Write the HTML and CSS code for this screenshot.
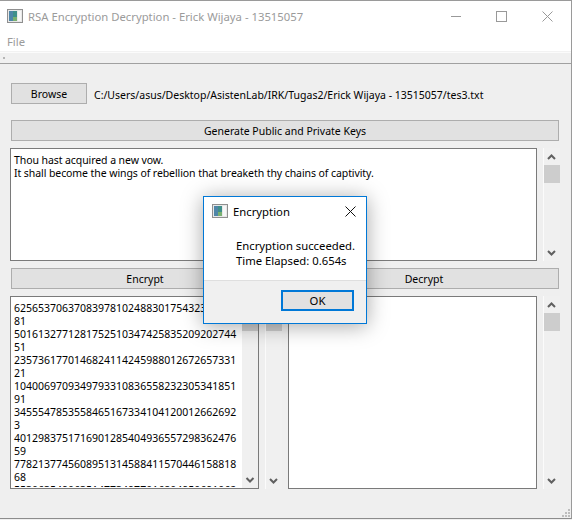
FILE: index.html
```html
<!DOCTYPE html>
<html lang="en">
<head>
<meta charset="utf-8">
<title>RSA Encryption Decryption</title>
<link rel="stylesheet" href="styles.css">
</head>
<body>
<div class="window">
  <header class="titlebar">
    <svg class="app-icon" width="16" height="14" viewBox="0 0 16 14"><rect x="0.5" y="0.5" width="15" height="13" fill="#e8e8e8" stroke="#8f8f8f"/><rect x="2" y="2" width="8" height="10" fill="#3f8f8a"/><rect x="2" y="2" width="4" height="10" fill="#4f86a8"/><rect x="6" y="8" width="4" height="4" fill="#79b070"/><rect x="11" y="2" width="3" height="10" fill="#f7f7f7"/></svg>
    <span class="title">RSA Encryption Decryption - Erick Wijaya - 13515057</span>
    <div class="caption-buttons">
      <svg width="10" height="10" viewBox="0 0 10 10"><path d="M0 5.5H10" stroke="#999" fill="none"/></svg>
      <svg width="11" height="11" viewBox="0 0 11 11"><rect x="0.5" y="0.5" width="10" height="10" stroke="#999" fill="none"/></svg>
      <svg width="11" height="11" viewBox="0 0 11 11"><path d="M0.5 0.5L10.5 10.5M10.5 0.5L0.5 10.5" stroke="#999" fill="none"/></svg>
    </div>
  </header>
  <nav class="menubar"><span>File</span></nav>
  <div class="toolbar"><span class="toolbar-handle"></span></div>
  <main class="central">
    <div class="file-row">
      <button class="btn btn-browse">Browse</button>
      <span class="path">C:/Users/asus/Desktop/AsistenLab/IRK/Tugas2/Erick Wijaya - 13515057/tes3.txt</span>
    </div>
    <button class="btn btn-generate">Generate Public and Private Keys</button>
    <div class="plain-row">
      <div class="textbox textbox-wide">
        <div class="text prose">Thou hast acquired a new vow.<br>It shall become the wings of rebellion that breaketh thy chains of captivity.</div>
      </div>
      <div class="scrollbar">
        <svg class="arrow" width="17" height="17" viewBox="0 0 17 17"><path d="M5 11L8.5 7.5L12 11" /></svg>
        <span class="thumb"></span>
        <span class="track"></span>
        <svg class="arrow" width="17" height="17" viewBox="0 0 17 17"><path d="M5 7L8.5 10.5L12 7" /></svg>
      </div>
    </div>
    <div class="action-row">
      <button class="btn btn-encrypt">Encrypt</button>
      <button class="btn btn-decrypt">Decrypt</button>
    </div>
    <div class="cipher-row">
      <div class="textbox textbox-half">
        <div class="text digits">6256537063708397810248830175432335071<br>81<br>5016132771281752510347425835209202744<br>51<br>2357361770146824114245988012672657331<br>21<br>1040069709349793310836558232305341851<br>91<br>3455547853558465167334104120012662692<br>3<br>4012983751716901285404936557298362476<br>59<br>7782137745608951314588411570446158818<br>68<br>5530635490635147734977016804950691062</div>
        <div class="scrollbar scrollbar-inner">
          <svg class="arrow" width="16" height="16" viewBox="0 0 16 16"><path d="M4.5 10L8 6.5L11.5 10" /></svg>
          <span class="thumb"></span>
          <span class="track"></span>
          <svg class="arrow" width="16" height="16" viewBox="0 0 16 16"><path d="M4.5 6L8 9.5L11.5 6" /></svg>
        </div>
      </div>
      <div class="scrollbar">
        <svg class="arrow" width="17" height="17" viewBox="0 0 17 17"><path d="M5 11L8.5 7.5L12 11" /></svg>
        <span class="thumb"></span>
        <span class="track"></span>
        <svg class="arrow" width="17" height="17" viewBox="0 0 17 17"><path d="M5 7L8.5 10.5L12 7" /></svg>
      </div>
      <div class="textbox textbox-half"></div>
      <div class="scrollbar">
        <svg class="arrow" width="17" height="17" viewBox="0 0 17 17"><path d="M5 11L8.5 7.5L12 11" /></svg>
        <span class="thumb"></span>
        <span class="track"></span>
        <svg class="arrow" width="17" height="17" viewBox="0 0 17 17"><path d="M5 7L8.5 10.5L12 7" /></svg>
      </div>
    </div>
  </main>
  <svg class="grip" width="8" height="8" viewBox="0 0 8 8"><path d="M6 0h2v2H6zM3 3h2v2H3zM6 3h2v2H6zM0 6h2v2H0zM3 6h2v2H3zM6 6h2v2H6z" fill="#bdbdbd"/></svg>
</div>
<section class="dialog">
  <header class="dialog-title">
    <svg class="app-icon" width="16" height="14" viewBox="0 0 16 14"><rect x="0.5" y="0.5" width="15" height="13" fill="#e8e8e8" stroke="#8f8f8f"/><rect x="2" y="2" width="8" height="10" fill="#3f8f8a"/><rect x="2" y="2" width="4" height="10" fill="#4f86a8"/><rect x="6" y="8" width="4" height="4" fill="#79b070"/><rect x="11" y="2" width="3" height="10" fill="#f7f7f7"/></svg>
    <span>Encryption</span>
    <svg class="dialog-close" width="11" height="11" viewBox="0 0 11 11"><path d="M0.5 0.5L10.5 10.5M10.5 0.5L0.5 10.5" stroke="#111" fill="none"/></svg>
  </header>
  <div class="dialog-body">Encryption succeeded.<br>Time Elapsed: 0.654s</div>
  <footer class="dialog-footer"><button class="btn btn-ok">OK</button></footer>
</section>
</body>
</html>
```
FILE: styles.css
```css
* { box-sizing: border-box; }
html, body { margin: 0; padding: 0; }
body {
  width: 572px;
  height: 520px;
  position: relative;
  overflow: hidden;
  background: #efefef;
  font-family: "Noto Sans", sans-serif;
  font-size: 10.5px;
  color: #000;
}
.window {
  width: 572px;
  height: 519px;
  display: flex;
  flex-direction: column;
  position: relative;
  border-top: 1px solid #9a9a9a;
  border-bottom: 1px solid #8c8c8c;
  border-right: 1px solid #9a9a9a;
  background: #efefef;
}
.titlebar {
  height: 30px;
  flex: none;
  display: flex;
  align-items: center;
  padding-left: 7px;
  background: #fff;
  color: #9b9b9b;
  font-size: 11.3px;
}
.app-icon { flex: none; }
.title { margin-left: 5px; }
.caption-buttons {
  margin-left: auto;
  display: flex;
  align-items: center;
  gap: 35px;
  padding-right: 18px;
}
.menubar {
  height: 21px;
  flex: none;
  display: flex;
  align-items: center;
  padding-left: 7px;
  background: #fff;
  color: #9b9b9b;
  font-size: 11.3px;
  border-bottom: 1px solid #f2f2f2;
}
.toolbar {
  height: 12px;
  flex: none;
  display: flex;
  align-items: center;
  padding-left: 3px;
  background: #f0f0f0;
  border-bottom: 1px solid #a0a0a0;
  border-top: 1px solid #fbfbfb;
}
.toolbar-handle { width: 2px; height: 2px; background: #b5b5b5; }
.central {
  flex: 1;
  display: flex;
  flex-direction: column;
  padding: 19px 0 0 10px;
}
.btn {
  display: block;
  margin: 0;
  padding: 0;
  font: inherit;
  color: #000;
  background: #e1e1e1;
  border: 1px solid #adadad;
  height: 21px;
  text-align: center;
}
.file-row { display: flex; align-items: center; height: 21px; margin-left: 1px; }
.btn-browse { width: 76px; }
.path { margin-left: 7px; padding-top: 2px; }
.btn-generate { width: 548px; margin: 16px 0 0 1px; }
.plain-row { display: flex; gap: 6px; margin-top: 7px; height: 113px; }
.action-row { display: flex; gap: 10px; margin: 7px 0 0 1px; }
.btn-encrypt { width: 268px; }
.btn-decrypt { width: 270px; }
.cipher-row { display: flex; gap: 6px; margin-top: 7px; height: 193px; }
.textbox {
  background: #fff;
  border: 1px solid #7a7a7a;
  overflow: hidden;
  display: flex;
  line-height: 13px;
}
.textbox-wide { width: 527px; }
.textbox-half { width: 249px; }
.text { padding: 5px 3px; flex: 1; min-width: 0; white-space: nowrap; overflow: hidden; }
.prose { letter-spacing: -0.08px; }
.digits { border-bottom: 1px solid #fff; }
.scrollbar {
  width: 17px;
  flex: none;
  display: flex;
  flex-direction: column;
  background: #f0f0f0;
  border-left: 1px solid #fbfbfb;
}
.scrollbar-inner { width: 16px; border-left: 0; }
.arrow { flex: none; display: block; margin-left: -1px; }
.scrollbar-inner .arrow { margin-left: 0; }
.arrow path { fill: none; stroke: #606060; stroke-width: 2; }
.thumb { height: 18px; flex: none; background: #cdcdcd; }
.track { flex: 1; }
.grip { position: absolute; right: 1px; bottom: 1px; }
.dialog {
  position: absolute;
  left: 203px;
  top: 196px;
  width: 164px;
  height: 128px;
  display: flex;
  flex-direction: column;
  background: #fff;
  border: 1px solid #0078d7;
  box-shadow: 0 2px 20px rgba(0, 0, 0, 0.35);
  font-size: 11.3px;
}
.dialog-title {
  height: 28px;
  flex: none;
  display: flex;
  align-items: center;
  padding: 0 10px 0 8px;
  gap: 5px;
}
.dialog-close { margin-left: auto; }
.dialog-body { flex: 1; padding: 13px 0 0 32px; line-height: 15px; }
.dialog-footer {
  flex: none;
  height: 43px;
  display: flex;
  align-items: flex-start;
  justify-content: flex-end;
  padding: 9px 12px 0 0;
  background: #f0f0f0;
  border-top: 1px solid #dfdfdf;
}
.btn-ok { width: 73px; border: 2px solid #0078d7; font-size: 11.3px; }
```
